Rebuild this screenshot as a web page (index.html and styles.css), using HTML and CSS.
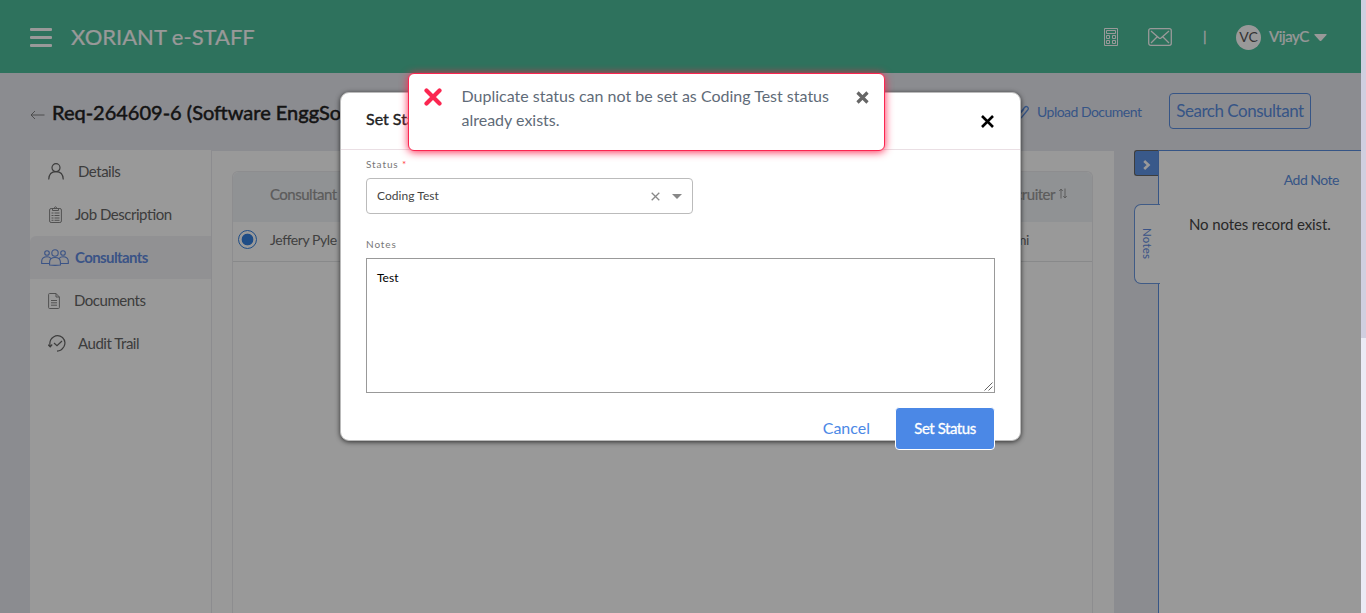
FILE: index.html
```
<!DOCTYPE html>
<html lang="en">
<head>
<meta charset="utf-8">
<title>XORIANT e-STAFF</title>
<link rel="stylesheet" href="styles.css">
</head>
<body>
<div class="shell">
<div class="app">
  <header class="topbar">
    <div class="burger"><i></i><i></i><i></i></div>
    <div class="brand">XORIANT e-STAFF</div>
    <div class="top-actions">
      <svg class="calc" width="14" height="18" viewBox="0 0 14 18" fill="none" stroke="currentColor"><path d="M.5.5h13v17H.5zM2.5 2.5h9v3h-9zM2.500 7.500h3v3h-3zM8.500 7.500h3v3h-3zM2.500 12.500h3v3h-3zM8.500 12.500h3v3h-3z"/></svg>
      <svg class="mail" width="24" height="18" viewBox="0 0 24 18" fill="none" stroke="currentColor" stroke-width="1.300"><rect x=".7" y=".7" width="22.600" height="16.600" rx="2"/><path d="M3 3l8 7q1 .8 2 0l8-7M3 15l6-6M21 15l-6-6"/></svg>
      <span class="bar">|</span>
      <span class="avatar">VC</span>
      <span class="user">VijayC</span>
      <svg class="caret" width="13" height="7" viewBox="0 0 13 7" fill="currentColor"><path d="M1 0h11q1 .3.500 1L7.500 6.500q-1 1-2 0L.5 1Q0 .3 1 0z"/></svg>
    </div>
  </header>
  <div class="titlebar">
    <svg class="back" width="15" height="10" viewBox="0 0 15 10" fill="none" stroke="currentColor" stroke-width=".9"><path d="M14.500 5H1M5 1L1 5l4 4"/></svg>
    <h1 class="title">Req-264609-6 (Software EnggSo</h1>
    <div class="title-actions">
      <svg class="clip" width="13" height="14" viewBox="0 0 13 14" fill="none" stroke="currentColor" stroke-width="1.300"><path d="M1 12l7.500-9.500q1.500-1.700 3-.5 1.500 1.300.2 3L5.500 12.500q-1.500 1.300-2.700.2-1.200-1.300 0-2.700L8 4"/></svg>
      <span class="upload">Upload Document</span>
      <span class="search">Search Consultant</span>
    </div>
  </div>
  <main class="main">
    <nav class="side">
      <div class="item details"><svg width="16" height="17" viewBox="0 0 16 17" fill="none" stroke="currentColor" stroke-width="1.200"><circle cx="8" cy="4.700" r="4"/><path d="M.7 16.500q.3-7.800 7.300-7.800t7.300 7.800"/></svg><span>Details</span></div>
      <div class="item job"><svg width="13" height="17" viewBox="0 0 13 17" fill="none" stroke="currentColor"><rect x=".6" y="2.500" width="11.800" height="14" rx="1.500"/><path d="M3.500 4.500v-2H5q1.500-3.500 3 0h1.500v2zM2.500 7h2M5.500 7h5M2.500 9.500h2M5.500 9.500h5M2.500 12h2M5.500 12h5M2.500 14.300h2M5.500 14.300h5"/></svg><span>Job Description</span></div>
      <div class="item people active"><svg width="28" height="17" viewBox="0 0 28 17" fill="none" stroke="currentColor" stroke-width="1.100"><circle cx="14" cy="4" r="3.200"/><circle cx="6" cy="4" r="2.300"/><circle cx="22" cy="4" r="2.300"/><path d="M8.600 16v-3q.2-4.500 5.400-4.500t5.400 4.500v3q-5.400.8-10.800 0zM8 14.500H.7V12Q1 7.800 6 7.800q2.500 0 3.800 1.500M20 14.500h7.300V12q-.3-4.200-5.300-4.200-2.500 0-3.800 1.500"/></svg><span>Consultants</span></div>
      <div class="item docs"><svg width="12" height="16" viewBox="0 0 12 16" fill="none" stroke="currentColor"><path d="M.6 1.500q0-1 1-1H8L11.400 4v10.500q0 1-1 1H1.600q-1 0-1-1zM8 .5V4h3.400M3 7.500h6M3 9.800h6M3 12.200h6"/></svg><span>Documents</span></div>
      <div class="item audit"><svg width="18" height="17" viewBox="0 0 18 17" fill="none" stroke="currentColor" stroke-width="1.200"><path d="M2.200 11.500Q.7 5 5.500 2 10-.8 14.500 2.500q4 4 1.500 9-2.500 4.500-7 4.700M0 9.800l2.200 2 2-2.300M6 8l3 2.700L14 6"/></svg><span>Audit Trail</span></div>
    </nav>
    <section class="content">
      <div class="table">
        <div class="thead"><span>Consultant</span><span class="rec">Recruiter<svg width="8" height="11" viewBox="0 0 8 11" fill="none" stroke="currentColor"><path d="M2 10.500V1M.3 3L2 1l1.700 2M6 .5V10M4.300 8L6 10l1.700-2"/></svg></span></div>
        <div class="row"><i class="radio"></i><span>Jeffery Pyle</span><span class="name">Rashmi</span></div>
      </div>
    </section>
    <div class="tabs">
      <div class="collapse"><svg width="8" height="10" viewBox="0 0 8 10" fill="none" stroke="#fff" stroke-width="2.600"><path d="M1.200 1L5.500 5 1.200 9"/></svg></div>
      <div class="notes-tab"><span>Notes</span></div>
    </div>
    <aside class="notes">
      <div class="add">Add Note</div>
      <div class="empty">No notes record exist.</div>
    </aside>
  </main>
</div>
<div class="scroll"><i></i></div>
</div>
<div class="backdrop"></div>
<div class="modal">
  <div class="modal-head"><span>Set Status</span><svg width="13" height="13" viewBox="0 0 13 13" stroke="#000" stroke-width="2.600"><path d="M1 1l11 11M12 1L1 12"/></svg></div>
  <div class="modal-body">
    <div class="label">Status <b>*</b></div>
    <div class="select"><span>Coding Test</span><svg class="clear" width="9" height="9" viewBox="0 0 9 9" stroke="#888" stroke-width="1.300"><path d="M.7.7l7.600 7.600M8.300.7L.7 8.300"/></svg><i class="arrow"></i></div>
    <div class="label label-notes">Notes</div>
    <div class="area"><span>Test</span><svg width="9" height="9" viewBox="0 0 9 9" stroke="#555" stroke-width=".9"><path d="M.5 8.500l8-8M4.500 8.500l4-4"/></svg></div>
    <div class="buttons"><span class="cancel">Cancel</span><span class="submit">Set Status</span></div>
  </div>
</div>
<div class="toast">
  <svg class="err" width="18" height="18" viewBox="0 0 18 18" stroke="#fb2650" stroke-width="4.200" stroke-linecap="round"><path d="M2.500 2.500l13 13M15.500 2.500l-13 13"/></svg>
  <p>Duplicate status can not be set as Coding Test status already exists.</p>
  <svg class="dismiss" width="13" height="13" viewBox="0 0 13 13" stroke="#666" stroke-width="3.200"><path d="M1.500 1.500l10 10M11.500 1.500l-10 10"/></svg>
</div>
</body>
</html>
```
FILE: styles.css
```
* { box-sizing: border-box; }
body { margin: 0; height: 613px; overflow: hidden; font-family: Lato, "Liberation Sans", sans-serif; font-size: 14px; color: #6b6b6b; }
svg { flex: none; display: block; }
span { white-space: nowrap; }
.shell { display: flex; height: 613px; }
.app { width: 1361px; background: #e8e9f1; display: flex; flex-direction: column; }
.scroll { width: 5px; background: #ebebf5; }
.scroll i { display: block; height: 338px; background: #d0cfe0; }

.topbar { height: 73px; flex: none; background: #4ebe9b; color: #fff; display: flex; align-items: center; padding: 1px 34px 0 30px; }
.burger { width: 22px; display: grid; gap: 5px; margin-top: 1px; }
.burger i { height: 3px; background: #fff; border-radius: 1px; }
.brand { margin: 0 0 1px 19px; font-size: 22px; line-height: 26px; white-space: nowrap; -webkit-text-stroke: .2px #fff; }
.top-actions { margin-left: auto; display: flex; align-items: center; }
.mail { margin-left: 30px; }
.bar { width: 4px; margin: 0 0 1px 31px; font-size: 14px; -webkit-text-stroke: .3px #fff; }
.avatar { width: 25px; height: 25px; margin-left: 29px; border-radius: 50%; background: #fff; color: #555; line-height: 24px; text-align: center; font-size: 14px; }
.user { margin: 0 0 2px 8px; width: 40px; font-size: 15px; letter-spacing: -.4px; -webkit-text-stroke: .2px #fff; }
.caret { margin-left: 5px; }

.titlebar { height: 77px; flex: none; padding: 0 50px 0 30px; display: flex; align-items: center; }
.back { margin-top: 6px; color: #777; }
.title { margin: 0 0 0 7px; font-size: 20px; font-weight: 400; -webkit-text-stroke: .5px #222; line-height: 26px; color: #222; white-space: nowrap; }
.title-actions { margin-left: auto; display: flex; align-items: center; color: #5b8ee0; }
.upload { margin: 0 0 0 8px; width: 104px; font-size: 14px; letter-spacing: -.52px; }
.search { margin-left: 28px; width: 142px; height: 36px; line-height: 34px; text-align: center; border: 1px solid #5b8ee0; border-radius: 4px; font-size: 17px; letter-spacing: -.48px; margin-top: -1px; }

.main { flex: 1; min-height: 0; display: flex; padding-left: 30px; }
.side { width: 182px; background: #fff; border-right: 1px solid #eaeaef; }
.item { height: 43px; display: flex; align-items: center; font-size: 15px; letter-spacing: -.47px; font-feature-settings: "liga" 1; color: #666; }
.item span { margin-bottom: 1px; }
.details { padding-left: 18px; gap: 14px; }
.job { padding-left: 19px; gap: 13px; }
.people { padding-left: 11px; gap: 6px; }
.docs { padding-left: 18px; gap: 14px; }
.audit { padding-left: 18px; gap: 12px; }
.job svg, .docs svg { color: #888; }
.active { background: #f2f2f6; border-radius: 6px 0 0; color: #628bdf; font-weight: 700; letter-spacing: -.6px; }
.content { width: 902px; background: #fff; padding: 20px 21px 0 20px; margin-top: 1px; }
.table { height: 100%; border: 1px solid #ebecef; border-bottom: 0; border-radius: 6px 6px 0 0; }
.thead { height: 50px; background: #f1f3f7; border-radius: 6px 6px 0 0; display: flex; align-items: center; justify-content: space-between; padding: 0 25px 7px 37px; font-size: 15px; letter-spacing: -.5px; color: #999; -webkit-text-stroke: .2px #999; }
.rec { display: flex; align-items: center; gap: 4px; }
.row { height: 40px; border-bottom: 1px solid #e3e4e7; display: flex; align-items: center; padding: 0 63px 4px 5px; font-size: 14px; letter-spacing: -.42px; font-feature-settings: "liga" 1; }
.row span { margin-bottom: 1px; }
.radio { width: 19px; height: 19px; margin-right: 13px; border: 1.500px solid #3481df; border-radius: 50%; background: radial-gradient(circle, #3481df 5.500px, transparent 6.200px); }
.row .name { margin-left: auto; }
.tabs { width: 25px; margin-left: 20px; display: flex; flex-direction: column; align-items: flex-start; }
.collapse { width: 24px; height: 26px; background: #6094e7; border: 1px solid #666; border-right: 0; border-radius: 3px 0 0 3px; display: grid; place-items: center; padding: 3px 0 0; }
.notes-tab { width: 26px; height: 80px; margin-top: 28px; background: #fff; border: 1px solid #6b98df; border-right: 0; border-radius: 7px 0 0 7px; color: #628bdf; z-index: 1; display: grid; place-items: center; font-size: 11.500px; letter-spacing: .2px; }
.notes-tab span { writing-mode: vertical-rl; }
.notes { flex: 1; background: #fff; border: 1px solid #5b8ee0; border-width: 1px 0 0 1px; margin-left: -1px; }
.add { padding: 21px 22px 0 0; text-align: right; font-size: 14px; letter-spacing: -.5px; line-height: 16px; color: #5b8ee0; }
.empty { margin: 27px 0 0 30px; font-size: 15px; line-height: 18px; letter-spacing: -.12px; color: #444; white-space: nowrap; }

.backdrop { position: absolute; left: 0; top: 0; width: 1361px; height: 613px; background: rgba(0,0,0,.4); z-index: 2; }
.modal { position: absolute; left: 340px; top: 92px; width: 681px; height: 349px; z-index: 3; background: #fff; border: 1px solid #bbb; border-radius: 9px; box-shadow: 0 1px 5px rgba(0,0,0,.7); }
.modal-head { height: 57px; border-bottom: 1px solid #eadfe4; padding: 0 26px 5px 25px; display: flex; align-items: center; justify-content: space-between; font-size: 16px; color: #222; -webkit-text-stroke: .4px #222; }
.modal-head svg { margin-top: 5px; }
.modal-body { padding: 7px 25px 0; }
.label { height: 21px; line-height: 14px; font-size: 10px; letter-spacing: .9px; color: #777; }
.label b { color: #f44; font-weight: 400; }
.select { width: 327px; height: 36px; border: 1px solid #bbb; border-radius: 4px; padding: 0 10px 0 10px; display: flex; align-items: center; font-size: 12px; letter-spacing: .05px; color: #444; }
.select span { margin: 0 0 1px; }
.clear { margin-left: auto; }
.arrow { margin-left: 12px; border: 5px solid transparent; border-top-color: #888; border-bottom: 0; }
.label-notes { margin-top: 23px; }
.area { height: 135px; border: 1px solid #999; padding: 11px 1px 1px 10px; display: flex; justify-content: space-between; font-size: 12px; line-height: 15px; color: #000; }
.area svg { align-self: flex-end; }
.buttons { display: flex; justify-content: flex-end; align-items: center; margin-top: 14px; }
.cancel { color: #4b88e6; font-size: 16px; margin-bottom: 2px; }
.submit { margin-left: 25px; width: 100px; height: 43px; border: 1px solid #fff; border-radius: 4px; background: #4b88e6; color: #fff; line-height: 41px; text-align: center; font-size: 15px; letter-spacing: -.45px; -webkit-text-stroke: .3px #fff; }
.toast { position: absolute; left: 408px; top: 73px; width: 477px; height: 78px; z-index: 4; background: #fff; border: 1px solid #fb2650; border-radius: 6px; box-shadow: 0 1px 8px #fb2650; display: flex; padding: 10px 15px 0; }
.err { margin-top: 4px; }
.toast p { margin: 0 0 0 19.500px; width: 394px; font-size: 16px; line-height: 24px; color: #5f6b78; }
.dismiss { margin: 7px 0 0 .5px; }
```
